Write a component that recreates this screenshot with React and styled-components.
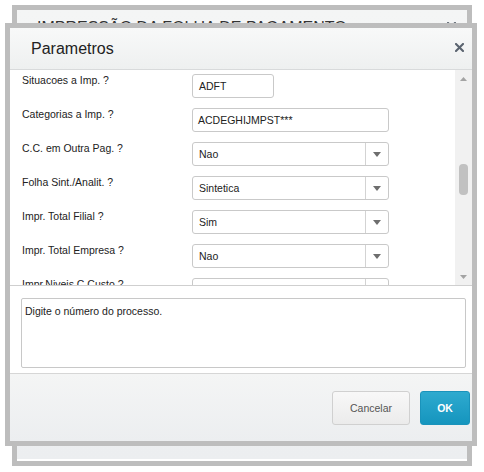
import React from 'react';
import styled, { createGlobalStyle } from 'styled-components';

const Global = createGlobalStyle`
  html, body { margin: 0; padding: 0; background: #fff; }
  body { font-family: "Liberation Sans", Arial, sans-serif; }
`;

const Desk = styled.div`
  position: relative;
  width: 484px;
  height: 472px;
  overflow: hidden;
  background: #fff;
`;

/* window frame shared by both dialogs */
const Frame = styled.div`
  position: absolute;
  left: ${p => p.$x}px;
  top: ${p => p.$y}px;
  width: ${p => p.$w}px;
  height: ${p => p.$h}px;
  box-sizing: border-box;
  border: 5px solid #bdbdbd;
  display: flex;
  flex-direction: column;
  overflow: hidden;
`;

const BackFrame = styled(Frame)`
  background: linear-gradient(#f4f5f5, #eceef0);
  box-shadow: inset 0 -2px 0 #fff;
`;

const DialogFrame = styled(Frame)`
  background: #fff;
`;

const BackHeader = styled.div`
  display: flex;
  justify-content: space-between;
  align-items: flex-start;
  padding: 9px 11px 0 20px;
  font-size: 16px;
  line-height: 18px;
  color: #333;
  text-transform: uppercase;
`;

const Header = styled.div`
  flex: none;
  height: 41px;
  display: flex;
  align-items: center;
  justify-content: space-between;
  padding: 0 8px 0 21px;
  background: linear-gradient(#f8f9f9, #eef0f0);
  border-bottom: 1px solid #d8dadb;
`;

const Title = styled.div`
  font-size: 16px;
  color: #222;
`;

const Close = styled.button`
  border: 0;
  padding: 0;
  margin: ${p => p.$mt || 0}px 0 0 0;
  background: none;
  display: flex;
  cursor: pointer;
  margin-bottom: ${p => p.$mb || 0}px;
`;

const CloseIcon = () => (
  <svg width="9" height="9" viewBox="0 0 9 9">
    <path d="M1 1 L8 8 M8 1 L1 8" stroke="#5b6470" strokeWidth="2.1" strokeLinecap="square" />
  </svg>
);

const Body = styled.div`
  flex: none;
  height: 215px;
  display: flex;
  border-bottom: 1px solid #cfcfcf;
`;

const Form = styled.div`
  flex: 1;
  overflow: hidden;
  padding-left: 12px;
`;

const Row = styled.div`
  display: grid;
  grid-template-columns: 170px auto;
  align-items: start;
  height: 34px;
`;

const Label = styled.div`
  padding-top: 3px;
  font-size: 10.5px;
  line-height: 14px;
  color: #222;
`;

const Field = styled.div`
  margin-top: 4px;
  width: ${p => p.$w}px;
  height: 24px;
  box-sizing: border-box;
  border: 1px solid #c9c9c9;
  border-radius: 3px;
  background: #fff;
  display: flex;
  align-items: center;
  font-size: 10.5px;
  color: #222;
`;

const Value = styled.div`
  flex: 1;
  padding-left: ${p => p.$pl || 6}px;
  white-space: nowrap;
  overflow: hidden;
`;

const ArrowBox = styled.div`
  width: 22px;
  align-self: stretch;
  border-left: 1px solid #d3d3d3;
  display: flex;
  align-items: center;
  justify-content: center;
`;

const Tri = ({ up, color = '#6e6e6e', w = 8, h = 5 }) => (
  <svg width={w} height={h} viewBox={`0 0 ${w} ${h}`}>
    <path d={up ? `M0 ${h} L${w / 2} 0 L${w} ${h} Z` : `M0 0 L${w} 0 L${w / 2} ${h} Z`} fill={color} />
  </svg>
);

const ScrollBar = styled.div`
  flex: none;
  width: 17px;
  background: #f1f1f1;
  display: flex;
  flex-direction: column;
`;

const ScrollBtn = styled.div`
  height: 17px;
  display: flex;
  align-items: center;
  justify-content: center;
`;

const Track = styled.div`
  flex: 1;
  display: flex;
  justify-content: center;
`;

const Thumb = styled.div`
  width: 9px;
  height: 31px;
  border-radius: 4px;
  background: #c1c1c1;
`;

const Message = styled.div`
  flex: none;
  padding: 12px 6px 5px 11px;
  border-bottom: 1px solid #d6d6d6;
`;

const MessageBox = styled.div`
  height: 70px;
  box-sizing: border-box;
  border: 1px solid #c8c8c8;
  border-radius: 2px;
  padding: 5px 3px;
  font-size: 10.5px;
  line-height: 14px;
  color: #222;
`;

const Footer = styled.div`
  flex: 1;
  display: flex;
  justify-content: flex-end;
  align-items: center;
  gap: 10px;
  padding-right: 2px;
  background: linear-gradient(#f4f5f5, #eceef0);
`;

const Button = styled.button`
  height: 34px;
  width: ${p => p.$w}px;
  box-sizing: border-box;
  border-radius: 3px;
  font-family: inherit;
  font-size: 10.5px;
  cursor: pointer;
  border: 1px solid ${p => (p.$primary ? '#1a93bb' : '#d0d0d0')};
  background: ${p => (p.$primary ? 'linear-gradient(#2eaacf, #1595be)' : 'linear-gradient(#f8f8f8, #ebebeb)')};
  color: ${p => (p.$primary ? '#fff' : '#555')};
  font-weight: ${p => (p.$primary ? 700 : 400)};
`;

const params = [
  { label: 'Situacoes a Imp. ?', value: 'ADFT', w: 82 },
  { label: 'Categorias a Imp. ?', value: 'ACDEGHIJMPST***', w: 197, pl: 5 },
  { label: 'C.C. em Outra Pag. ?', value: 'Nao', w: 197, select: true },
  { label: 'Folha Sint./Analit. ?', value: 'Sintetica', w: 197, select: true },
  { label: 'Impr. Total Filial ?', value: 'Sim', w: 197, select: true },
  { label: 'Impr. Total Empresa ?', value: 'Nao', w: 197, select: true },
  { label: 'Impr.Niveis C.Custo ?', value: 'Nao', w: 197, select: true },
];

export default function App() {
  return (
    <Desk>
      <Global />
      <BackFrame $x={12} $y={5} $w={460} $h={461}>
        <BackHeader>
          <span>Impressão da Folha de Pagamento</span>
          <Close $mt={3}><CloseIcon /></Close>
        </BackHeader>
      </BackFrame>

      <DialogFrame $x={5} $y={23} $w={472} $h={423}>
        <Header>
          <Title>Parametros</Title>
          <Close $mb={3}><CloseIcon /></Close>
        </Header>

        <Body>
          <Form>
            {params.map(p => (
              <Row key={p.label}>
                <Label>{p.label}</Label>
                <Field $w={p.w}>
                  <Value $pl={p.pl}>{p.value}</Value>
                  {p.select && (
                    <ArrowBox>
                      <Tri />
                    </ArrowBox>
                  )}
                </Field>
              </Row>
            ))}
          </Form>
          <ScrollBar>
            <ScrollBtn><Tri up color="#a3a3a3" w={7} h={4} /></ScrollBtn>
            <Track>
              <Thumb style={{ marginTop: 77 }} />
            </Track>
            <ScrollBtn><Tri color="#a3a3a3" w={7} h={4} /></ScrollBtn>
          </ScrollBar>
        </Body>

        <Message>
          <MessageBox>Digite o número do processo.</MessageBox>
        </Message>

        <Footer>
          <Button $w={78}>Cancelar</Button>
          <Button $w={50} $primary>OK</Button>
        </Footer>
      </DialogFrame>
    </Desk>
  );
}
